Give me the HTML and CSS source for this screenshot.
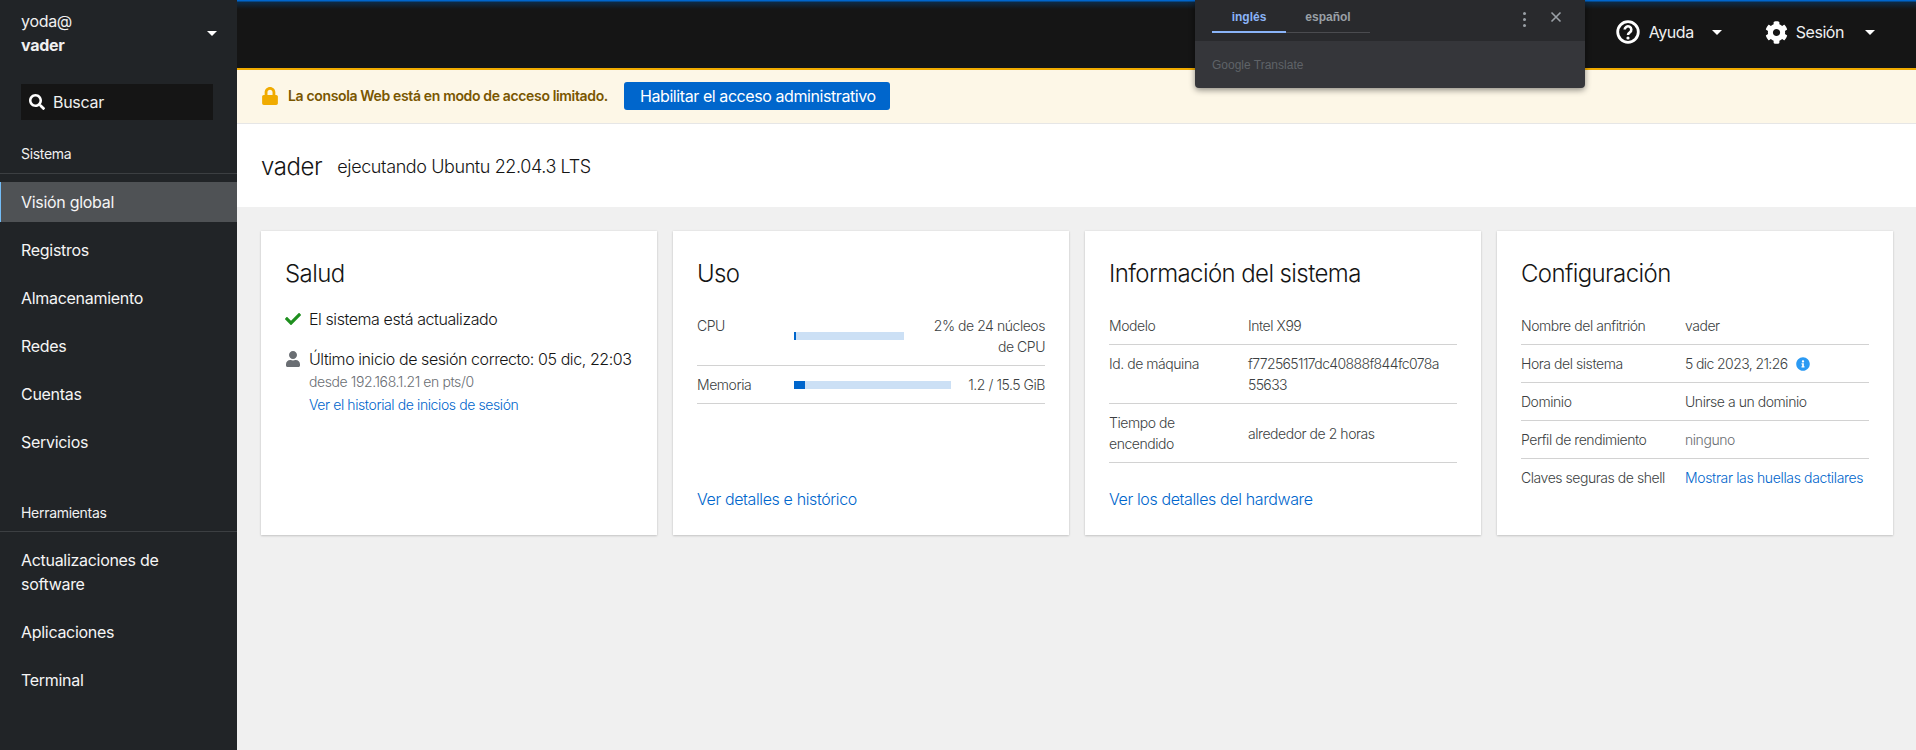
FILE: index.html
```html
<!DOCTYPE html>
<html lang="es">
<head>
<meta charset="utf-8">
<title>vader - Visión global</title>
<link rel="stylesheet" href="styles.css">
</head>
<body>
<div class="app">
  <aside class="sidebar">
    <div class="host">
      <div class="host-text"><div>yoda@</div><div class="host-name">vader</div></div>
      <span class="caret caret-host"></span>
    </div>
    <div class="search">
      <svg class="search-icon" viewBox="0 0 512 512"><path fill="#fff" d="M505 442.7L405.3 343c-4.5-4.5-10.6-7-17-7H372c27.6-35.3 44-79.7 44-128C416 93.1 322.9 0 208 0S0 93.1 0 208s93.1 208 208 208c48.3 0 92.7-16.4 128-44v16.3c0 6.4 2.5 12.5 7 17l99.7 99.7c9.4 9.4 24.6 9.4 33.9 0l28.3-28.3c9.4-9.4 9.4-24.6.1-34zM208 336c-70.7 0-128-57.2-128-128 0-70.7 57.2-128 128-128 70.7 0 128 57.2 128 128 0 70.7-57.2 128-128 128z"/></svg>
      <span>Buscar</span>
    </div>
    <div class="nav-title nav-title-first">Sistema</div>
    <nav class="nav-list">
      <a class="nav-item active">Visión global</a>
      <a class="nav-item">Registros</a>
      <a class="nav-item">Almacenamiento</a>
      <a class="nav-item">Redes</a>
      <a class="nav-item">Cuentas</a>
      <a class="nav-item">Servicios</a>
    </nav>
    <div class="nav-title nav-title-second">Herramientas</div>
    <nav class="nav-list">
      <a class="nav-item">Actualizaciones de software</a>
      <a class="nav-item">Aplicaciones</a>
      <a class="nav-item">Terminal</a>
    </nav>
  </aside>

  <div class="content">
    <header class="topbar">
      <div class="top-btn top-help">
        <svg class="help-icon" viewBox="0 0 24 24"><circle cx="12" cy="12" r="10.3" fill="none" stroke="#fff" stroke-width="2.8"/><path d="M8.7 9.6a3.3 3.3 0 1 1 5.2 2.7c-1.3.9-1.9 1.3-1.9 2.7" fill="none" stroke="#fff" stroke-width="2.6"/><circle cx="12" cy="18" r="1.6" fill="#fff"/></svg>
        <span>Ayuda</span>
        <span class="caret caret-help"></span>
      </div>
      <div class="top-btn top-session">
        <svg class="gear-icon" viewBox="0 0 512 512"><path fill="#fff" d="M487.4 315.7l-42.6-24.6c4.3-23.2 4.3-47 0-70.2l42.6-24.6c4.9-2.8 7.1-8.6 5.5-14-11.1-35.6-30-67.8-54.7-94.6-3.8-4.1-10-5.1-14.8-2.3L380.8 110c-17.9-15.4-38.5-27.3-60.8-35.1V25.8c0-5.6-3.9-10.5-9.4-11.7-36.7-8.2-74.3-7.8-109.2 0-5.5 1.2-9.4 6.1-9.4 11.7V75c-22.2 7.9-42.8 19.8-60.8 35.1L88.7 85.5c-4.9-2.8-11-1.9-14.8 2.3-24.7 26.7-43.6 58.9-54.7 94.6-1.7 5.4.6 11.2 5.5 14L67.3 221c-4.3 23.2-4.3 47 0 70.2l-42.6 24.6c-4.9 2.8-7.1 8.6-5.5 14 11.1 35.6 30 67.8 54.7 94.6 3.8 4.1 10 5.1 14.8 2.3l42.6-24.6c17.9 15.4 38.5 27.3 60.8 35.1v49.2c0 5.6 3.9 10.5 9.4 11.7 36.7 8.2 74.3 7.8 109.2 0 5.5-1.2 9.4-6.1 9.4-11.7v-49.2c22.2-7.9 42.8-19.8 60.8-35.1l42.6 24.6c4.9 2.8 11 1.9 14.8-2.3 24.7-26.7 43.6-58.9 54.7-94.6 1.5-5.5-.7-11.3-5.6-14.1zM256 336c-44.1 0-80-35.9-80-80s35.9-80 80-80 80 35.9 80 80-35.9 80-80 80z"/></svg>
        <span>Sesión</span>
        <span class="caret caret-session"></span>
      </div>
    </header>

    <div class="banner">
      <svg class="lock-icon" viewBox="0 0 448 512"><path fill="#f0ab00" d="M400 224h-24v-72C376 68.2 307.8 0 224 0S72 68.2 72 152v72H48c-26.5 0-48 21.5-48 48v192c0 26.5 21.5 48 48 48h352c26.5 0 48-21.5 48-48V272c0-26.5-21.5-48-48-48zm-104 0H152v-72c0-39.7 32.3-72 72-72s72 32.3 72 72v72z"/></svg>
      <span class="banner-text">La consola Web está en modo de acceso limitado.</span>
      <button class="banner-btn">Habilitar el acceso administrativo</button>
    </div>

    <section class="page-title">
      <h1 class="host-title">vader</h1>
      <span class="host-os">ejecutando Ubuntu 22.04.3 LTS</span>
    </section>

    <main class="cards">
      <article class="card">
        <h2 class="card-title">Salud</h2>
        <div class="health">
          <div class="health-row">
            <svg class="health-icon" viewBox="0 0 512 512"><path fill="#1e8f1e" d="M173.898 439.404l-166.4-166.4c-9.997-9.997-9.997-26.206 0-36.204l36.203-36.204c9.997-9.998 26.207-9.998 36.204 0L192 312.69 432.095 72.596c9.997-9.997 26.207-9.997 36.204 0l36.203 36.204c9.997 9.997 9.997 26.206 0 36.204l-294.4 294.401c-9.998 9.997-26.207 9.997-36.204-.001z"/></svg>
            <span>El sistema está actualizado</span>
          </div>
          <div class="health-row health-login">
            <svg class="health-icon" viewBox="0 0 448 512"><path fill="#6a6e73" d="M224 256c70.7 0 128-57.3 128-128S294.7 0 224 0 96 57.3 96 128s57.3 128 128 128zm89.6 32h-16.7c-22.2 10.2-46.9 16-72.9 16s-50.6-5.8-72.9-16h-16.7C60.2 288 0 348.2 0 422.4V464c0 26.5 21.5 48 48 48h352c26.5 0 48-21.5 48-48v-41.6c0-74.2-60.2-134.4-134.4-134.4z"/></svg>
            <div>
              <div>Último inicio de sesión correcto: 05 dic, 22:03</div>
              <div class="login-from">desde 192.168.1.21 en pts/0</div>
              <a class="link login-link">Ver el historial de inicios de sesión</a>
            </div>
          </div>
        </div>
      </article>

      <article class="card">
        <h2 class="card-title">Uso</h2>
        <div class="rows">
          <div class="row usage-row">
            <span class="usage-label">CPU</span>
            <div class="bar bar-cpu"><div class="bar-fill" style="width:2%"></div></div>
            <span class="usage-value usage-value-cpu">2% de 24 núcleos de CPU</span>
          </div>
          <div class="row usage-row">
            <span class="usage-label">Memoria</span>
            <div class="bar bar-mem"><div class="bar-fill" style="width:7%"></div></div>
            <span class="usage-value">1.2 / 15.5 GiB</span>
          </div>
        </div>
        <a class="link card-link">Ver detalles e histórico</a>
      </article>

      <article class="card">
        <h2 class="card-title">Información del sistema</h2>
        <div class="rows">
          <div class="row kv kv-info"><span class="kv-label">Modelo</span><span>Intel X99</span></div>
          <div class="row kv kv-info"><span class="kv-label">Id. de máquina</span><span class="break">f772565117dc40888f844fc078a<wbr>55633</span></div>
          <div class="row kv kv-info kv-center"><span class="kv-label">Tiempo de encendido</span><span>alrededor de 2 horas</span></div>
        </div>
        <a class="link card-link">Ver los detalles del hardware</a>
      </article>

      <article class="card">
        <h2 class="card-title">Configuración</h2>
        <div class="rows rows-plain">
          <div class="row kv kv-config"><span>Nombre del anfitrión</span><span>vader</span></div>
          <div class="row kv kv-config"><span>Hora del sistema</span><span class="time">5 dic 2023, 21:26
            <svg class="info-icon" viewBox="0 0 512 512"><path fill="#2b9af3" d="M256 8C119.043 8 8 119.083 8 256c0 136.997 111.043 248 248 248s248-111.003 248-248C504 119.083 392.957 8 256 8zm0 110c23.196 0 42 18.804 42 42s-18.804 42-42 42-42-18.804-42-42 18.804-42 42-42zm56 254c0 6.627-5.373 12-12 12h-88c-6.627 0-12-5.373-12-12v-24c0-6.627 5.373-12 12-12h12v-64h-12c-6.627 0-12-5.373-12-12v-24c0-6.627 5.373-12 12-12h64c6.627 0 12 5.373 12 12v100h12c6.627 0 12 5.373 12 12v24z"/></svg></span></div>
          <div class="row kv kv-config"><span>Dominio</span><span>Unirse a un dominio</span></div>
          <div class="row kv kv-config"><span>Perfil de rendimiento</span><span class="muted">ninguno</span></div>
          <div class="row kv kv-config row-last"><span>Claves seguras de shell</span><a class="link link-wide">Mostrar las huellas dactilares</a></div>
        </div>
      </article>
    </main>
  </div>
</div>

<div class="translate">
  <div class="translate-top">
    <div class="translate-tabs">
      <span class="tab tab-on">inglés</span>
      <span class="tab tab-off">español</span>
    </div>
    <span class="kebab"><i></i><i></i><i></i></span>
    <svg class="translate-close" viewBox="0 0 12 12"><path d="M1.5 1.5l9 9M10.5 1.5l-9 9" stroke="#9aa0a6" stroke-width="1.6" fill="none"/></svg>
  </div>
  <div class="translate-bottom">Google Translate</div>
</div>
</body>
</html>
```

FILE: styles.css
```css
* { box-sizing: border-box; }
html, body { margin: 0; height: 100%; }
body {
  font-family: Inter, "Noto Sans", "Liberation Sans", sans-serif;
  font-size: 16px;
  line-height: 24px;
  letter-spacing: -0.3px;
  color: #151515;
  background: #f0f0f0;
  overflow: hidden;
}
.app { display: grid; grid-template-columns: 237px 1fr; height: 750px; }

/* Sidebar */
.sidebar { background: #212427; color: #f0f0f0; height: 750px; overflow: hidden; }
.host { display: flex; align-items: center; justify-content: space-between; padding: 9px 20px 0 21px; }
.host-name { font-weight: 700; }
.caret { display: inline-block; width: 0; height: 0; border-left: 5px solid transparent; border-right: 5px solid transparent; border-top: 5px solid #fff; }
.search { display: flex; align-items: center; height: 36px; margin: 27px 24px 0 21px; padding-left: 8px; background: #151515; color: #f0f0f0; }
.search-icon { width: 16px; height: 16px; margin-right: 8px; }
.nav-title { font-size: 14px; line-height: 21px; padding: 0 21px 8.5px; border-bottom: 1px solid #3c3f42; color: #f0f0f0; }
.nav-title-first { margin-top: 23px; }
.nav-title-second { margin-top: 40px; }
.nav-list { display: flex; flex-direction: column; gap: 8px; padding-top: 8px; }
.nav-item { display: block; padding: 8px 40px 8px 21px; color: #f5f5f5; }
.nav-item.active { background: #4f5255; border-left: 1px solid #73bcf7; padding-left: 20px; }

/* Header */
.content { display: flex; flex-direction: column; min-width: 0; height: 750px; }
.topbar {
  height: 70px; flex: none; display: flex; justify-content: flex-end; align-items: center;
  padding: 0 41px 4px 0; color: #f0f0f0; letter-spacing: -0.45px;
  background: linear-gradient(#0066cc 0, #0066cc 1px, #0d2a45 2px, #151515 9px);
  border-bottom: 2px solid #f0ab00;
}
.top-btn { display: flex; align-items: center; }
.help-icon { width: 24px; height: 24px; margin-right: 9px; }
.gear-icon { width: 23px; height: 23px; margin-right: 8px; }
.caret-help { margin-left: 18px; }
.caret-session { margin-left: 21px; }
.top-session { margin-left: 43px; }

/* Banner */
.banner {
  height: 54px; flex: none; display: flex; align-items: center; padding: 0 0 1px 25px;
  background: #fdf7e7; border-bottom: 1px solid #e6e6e6;
}
.lock-icon { width: 16px; height: 18px; margin-right: 10px; }
.banner-text { font-size: 14px; font-weight: 600; color: #795600; margin-right: 16px; letter-spacing: -0.35px; }
.banner-btn {
  font: inherit; letter-spacing: -0.42px; color: #fff; background: #0066cc; border: 0; border-radius: 3px;
  height: 28px; padding: 0 16px; width: 266px; white-space: nowrap;
}

/* Page title */
.page-title { height: 83px; flex: none; background: #fff; display: flex; align-items: center; padding: 2px 24px 0; }
.host-title { margin: 0 15px 0 0; font-size: 24px; font-weight: 300; line-height: 31px; color: #151515; letter-spacing: -0.4px; }
.host-os { font-size: 18px; font-weight: 300; letter-spacing: -0.4px; }

/* Cards */
.cards { display: grid; grid-template-columns: repeat(4, 396px); gap: 16px; padding: 24px 23px 24px 24px; }
.card {
  height: 304px; background: #fff; padding: 24px; display: flex; flex-direction: column;
  box-shadow: 0 1px 2px rgba(3,3,3,.16), 0 0 2px rgba(3,3,3,.08);
}
.card-title { margin: 0 0 21px; font-size: 24px; font-weight: 300; line-height: 38px; height: 31px; letter-spacing: -0.6px; }
.link { color: #0066cc; }
.card-link { margin-top: auto; letter-spacing: -0.38px; font-weight: 300; }

.health { display: flex; flex-direction: column; gap: 16px; font-weight: 300; letter-spacing: -0.42px; }
.health-row { display: flex; align-items: flex-start; gap: 8px; }
.health-icon { width: 16px; height: 16px; flex: none; margin-top: 4px; }
.login-from { font-size: 14px; line-height: 23px; color: #6a6e73; letter-spacing: -0.4px; margin-top: -1px; }
.login-link { font-size: 14px; line-height: 23px; display: block; letter-spacing: -0.4px; }

.rows { font-size: 14px; line-height: 21px; color: #3c3f42; letter-spacing: -0.45px; font-weight: 300; }
.row { border-bottom: 1px solid #d2d2d2; padding: 8px 0; }
.row-last { border-bottom: 0; }
.usage-row { display: flex; align-items: flex-start; }
.usage-label { width: 97px; flex: none; }
.bar { height: 8px; background: #cce0f5; margin-top: 10px; }
.bar-fill { height: 100%; background: #0066cc; }
.bar-cpu { width: 110px; margin-top: 17px; }
.bar-mem { width: 157px; margin-top: 7px; }
.usage-value { margin-left: auto; text-align: right; }
.usage-value-cpu { width: 122px; }
.kv { display: grid; align-items: start; }
.kv-info { grid-template-columns: 139px 1fr; }
.kv-label { padding-right: 24px; }
.kv-center { align-items: center; }
.kv-config { grid-template-columns: 164px 1fr; }
.break { letter-spacing: -0.62px; }
.time { display: flex; align-items: center; gap: 9px; letter-spacing: -0.6px; }
.info-icon { width: 14px; height: 14px; }
.muted { color: #6a6e73; }
.link-wide { letter-spacing: -0.35px; white-space: nowrap; }

/* Translate popup */
.translate {
  position: absolute; left: 1195px; top: 0; width: 390px; height: 88px;
  background: #35363a; border-radius: 0 0 4px 4px; overflow: hidden;
  box-shadow: 0 2px 6px rgba(0,0,0,.45); font-family: "Liberation Sans", Arial, sans-serif; letter-spacing: 0;
}
.translate-top { height: 41px; background: #292a2d; display: flex; align-items: flex-start; padding-left: 17px; }
.translate-tabs { display: flex; width: 158px; height: 33px; border-bottom: 1px solid #4a4b4f; }
.tab { font-size: 12px; font-weight: 700; line-height: 34px; text-align: center; height: 33px; }
.tab-on { width: 74px; color: #8ab4f8; border-bottom: 2px solid #8ab4f8; }
.tab-off { width: 84px; color: #9aa0a6; }
.kebab { display: flex; flex-direction: column; gap: 3px; margin: 12px 0 0 153px; }
.kebab i { display: block; width: 3px; height: 3px; background: #9aa0a6; border-radius: 50%; }
.translate-close { width: 12px; height: 12px; margin: 11px 0 0 24px; }
.translate-bottom { padding: 12px 0 0 17px; font-size: 12px; line-height: 24px; color: #5f6368; }
```
